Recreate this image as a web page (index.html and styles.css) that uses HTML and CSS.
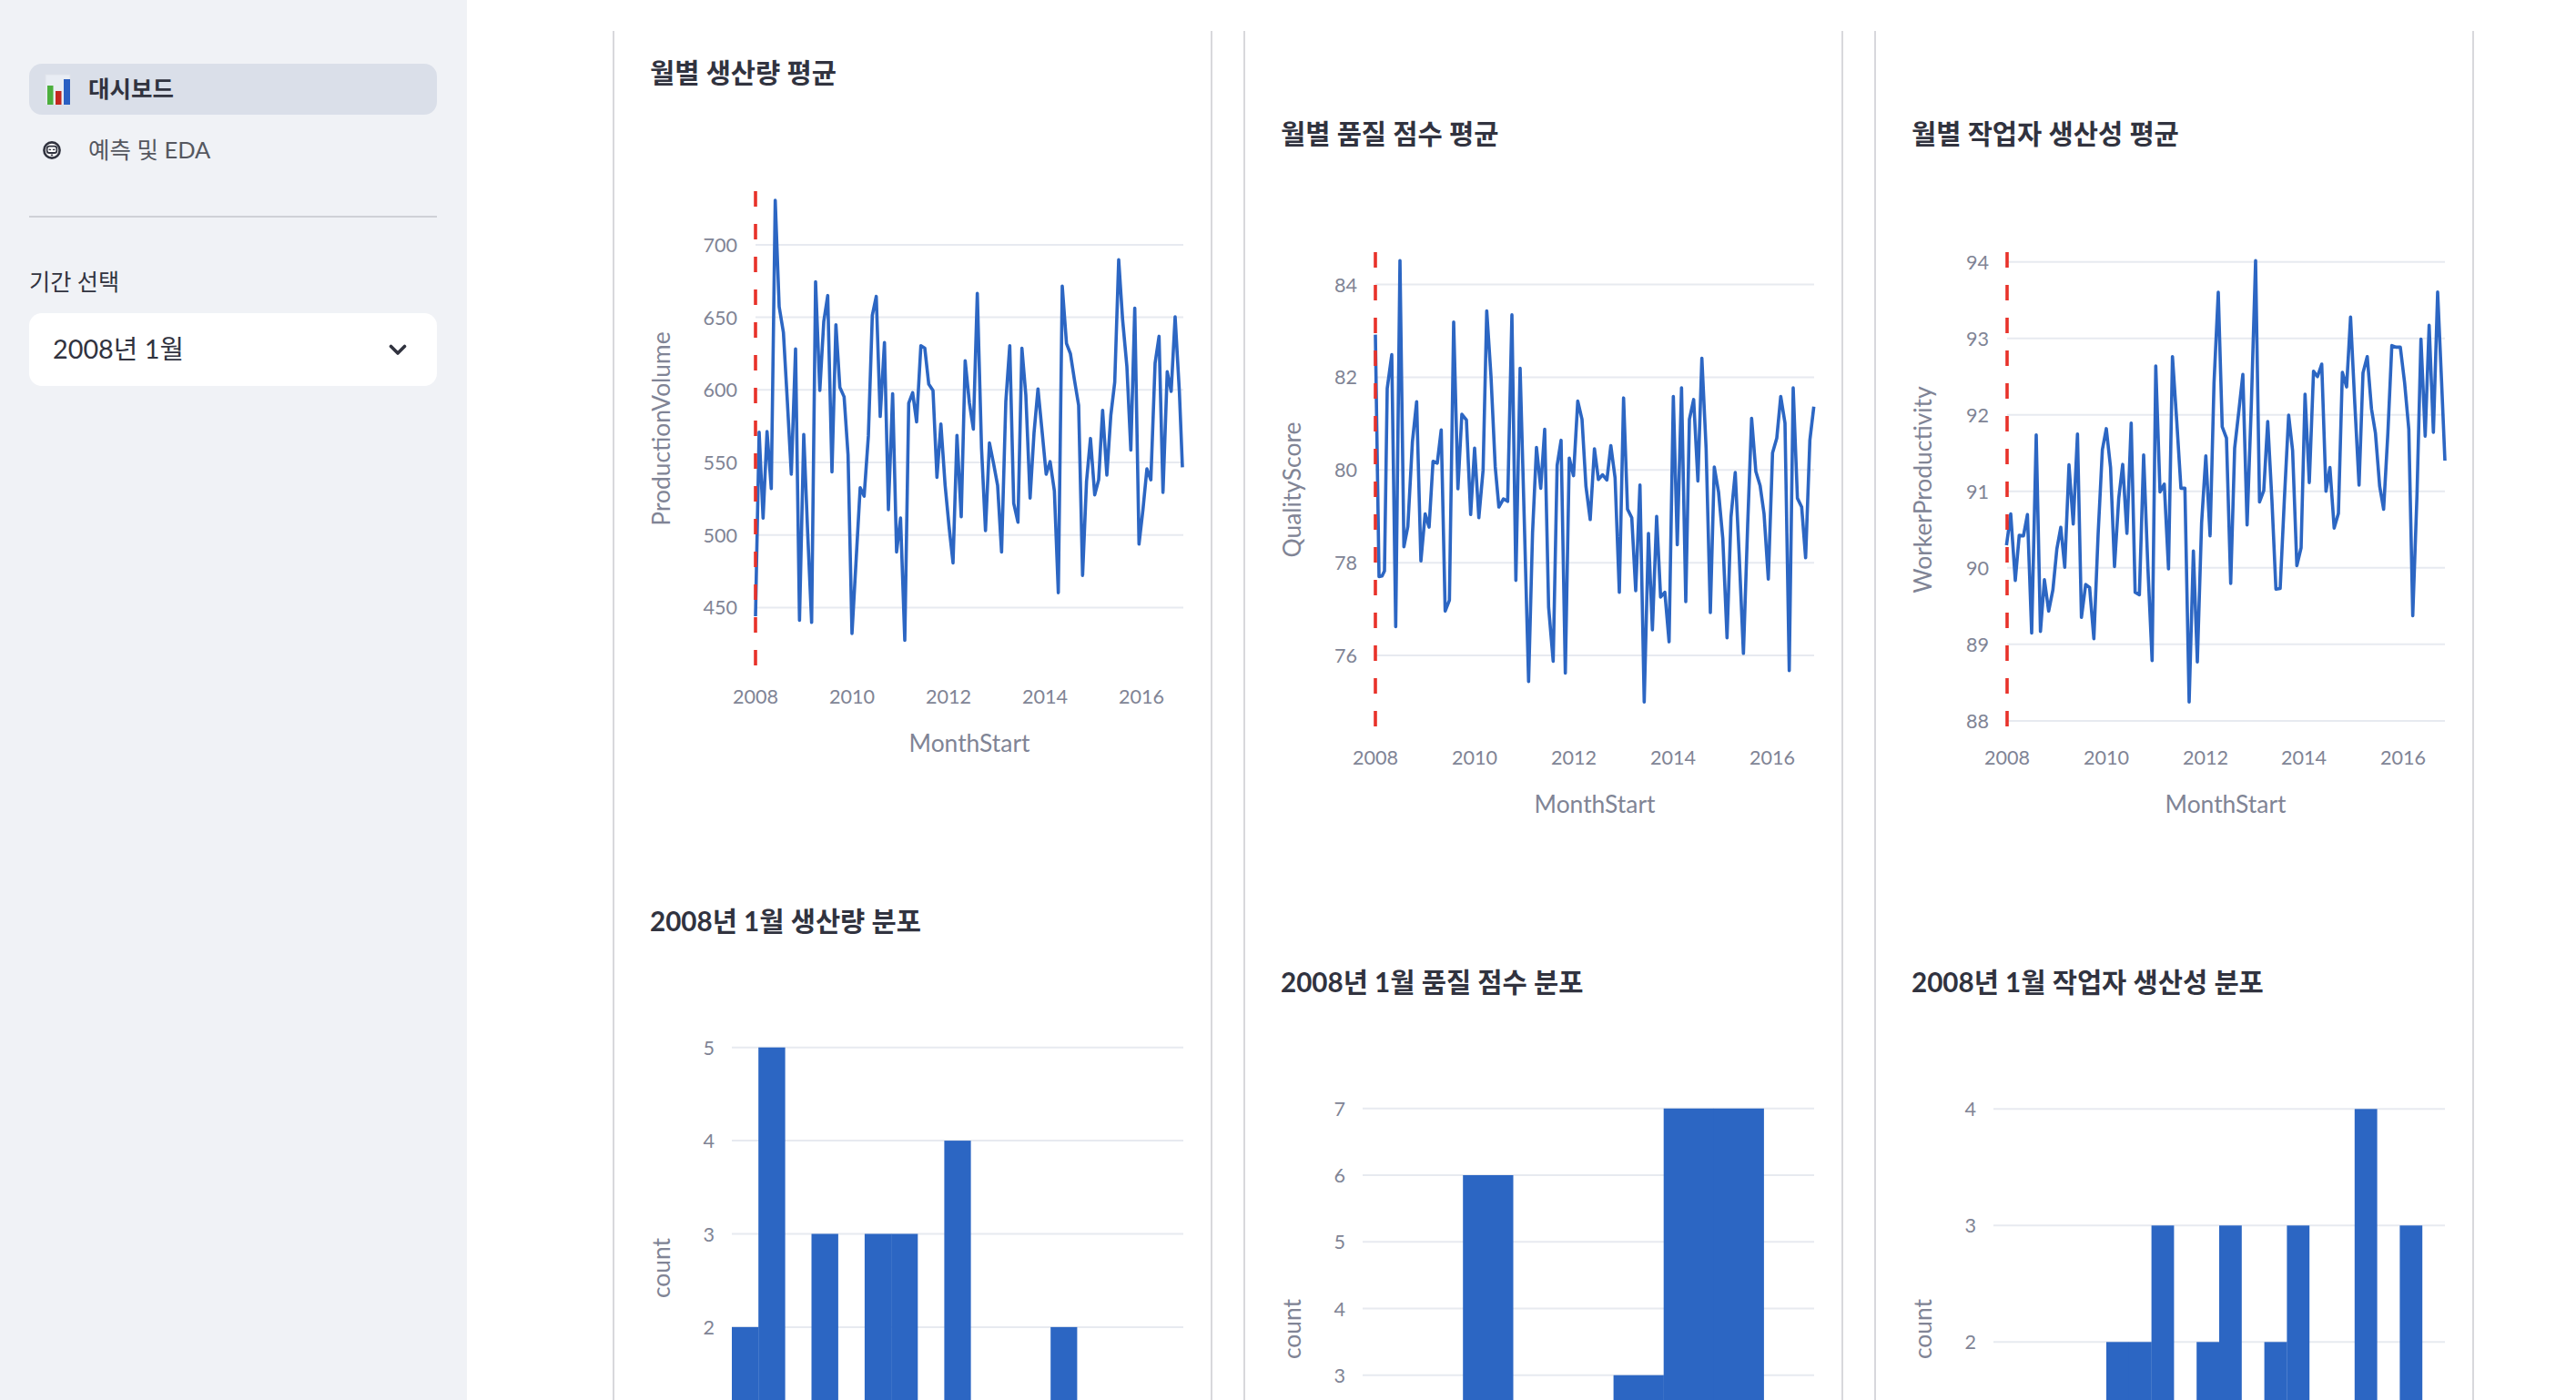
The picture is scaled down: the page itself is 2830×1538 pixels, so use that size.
FILE: index.html
```html
<!DOCTYPE html>
<html lang="ko">
<head>
<meta charset="utf-8">
<title>대시보드</title>
<link rel="stylesheet" href="styles.css">
</head>
<body>
<div class="app">
  <aside class="sidebar">
    <nav class="nav">
      <a class="nav-item active">
        <span class="nav-icon">
          <svg width="32" height="34" viewBox="0 0 32 34">
            <rect x="4" y="1" width="27" height="33" fill="#e9edf4"/>
            <rect x="4" y="1" width="27" height="33" fill="none" stroke="#dfe3ea" stroke-width="1"/>
            <rect x="6" y="13" width="6.5" height="21" fill="#4caf3e"/>
            <rect x="15" y="19" width="6.5" height="15" fill="#c4281f"/>
            <rect x="24" y="6" width="7" height="28" fill="#2a5fc2"/>
          </svg>
        </span>
        <span class="nav-text">대시보드</span>
      </a>
      <a class="nav-item">
        <span class="nav-icon">
          <svg width="32" height="22" viewBox="0 0 32 22">
            <circle cx="11" cy="11" r="8.6" fill="#fff" stroke="#31333f" stroke-width="2.6"/>
            <rect x="5.6" y="6.6" width="10.8" height="7.4" rx="2.6" fill="none" stroke="#31333f" stroke-width="1.8"/>
            <path d="M7.8 11 Q8.8 9.2 9.8 11 M12.2 11 Q13.2 9.2 14.2 11" fill="none" stroke="#31333f" stroke-width="1.1"/>
            <rect x="9.8" y="15.6" width="2.4" height="1.6" fill="#31333f"/>
          </svg>
        </span>
        <span class="nav-text">예측 및 EDA</span>
      </a>
    </nav>
    <div class="divider"></div>
    <div class="field-label">기간 선택</div>
    <div class="select">
      <span class="select-value">2008년 1월</span>
      <svg class="chevron" width="20" height="13" viewBox="0 0 20 13"><path d="M2.5 2.5 L10 10 L17.5 2.5" fill="none" stroke="#31333f" stroke-width="3.6" stroke-linecap="round" stroke-linejoin="round"/></svg>
    </div>
  </aside>

  <main class="main">
    <!-- Column 1 -->
    <section class="col">
      <div class="chart-title">월별 생산량 평균</div>
      <svg class="line-chart" width="655" height="887" viewBox="0 0 655 887">
        <g class="grid">
          <line x1="155" x2="625" y1="166.9" y2="166.9"/>
          <line x1="155" x2="625" y1="246.6" y2="246.6"/>
          <line x1="155" x2="625" y1="326.3" y2="326.3"/>
          <line x1="155" x2="625" y1="406.0" y2="406.0"/>
          <line x1="155" x2="625" y1="485.7" y2="485.7"/>
          <line x1="155" x2="625" y1="565.4" y2="565.4"/>
        </g>
        <g class="tick ytick">
          <text x="135" y="166.9">700</text>
          <text x="135" y="246.6">650</text>
          <text x="135" y="326.3">600</text>
          <text x="135" y="406.0">550</text>
          <text x="135" y="485.7">500</text>
          <text x="135" y="565.4">450</text>
        </g>
        <g class="tick xtick">
          <text x="155" y="663">2008</text>
          <text x="261" y="663">2010</text>
          <text x="367" y="663">2012</text>
          <text x="473" y="663">2014</text>
          <text x="579" y="663">2016</text>
        </g>
        <text class="axis-title" x="390" y="714">MonthStart</text>
        <text class="axis-title" transform="translate(51 369) rotate(-90)">ProductionVolume</text>
        <g transform="translate(145 98) scale(0.33333 0.34435)">
          <polyline class="series" points="30,1385 42,798 55,1072 68,796 82,978 95,58 108,398 122,480 135,700 148,932 162,532 175,1398 189,805 202,1120 215,1405 228,318 242,665 255,445 268,362 282,925 295,455 308,655 322,685 335,870 348,1440 362,1200 375,975 388,1002 402,810 415,425 428,365 441,748 455,512 468,1045 482,675 495,1180 508,1072 522,1462 535,705 548,672 561,765 575,522 588,530 601,645 615,665 628,942 641,772 655,968 668,1100 681,1215 694,808 708,1068 721,570 735,705 748,788 761,355 775,850 788,1112 801,832 815,900 828,968 841,1180 855,700 868,522 881,1025 895,1085 908,530 921,680 935,1008 948,800 961,660 975,800 988,932 1001,892 1015,985 1028,1310 1041,332 1055,515 1068,548 1081,630 1095,712 1108,1255 1121,955 1134,818 1148,998 1161,950 1174,728 1188,935 1201,745 1214,638 1227,248 1240,440 1254,588 1267,855 1280,402 1294,1155 1307,1045 1320,915 1333,950 1347,578 1360,492 1373,990 1387,605 1400,668 1413,430 1427,668 1437,910"/>
        </g>
        <line class="vline" x1="155" x2="155" y1="108" y2="630"/>
      </svg>
      <div class="chart-title">2008년 1월 생산량 분포</div>
      <svg class="hist-chart" width="655" height="503" viewBox="0 0 655 503">
        <g class="grid">
          <line x1="129" x2="625" y1="115.7" y2="115.7"/>
          <line x1="129" x2="625" y1="218.1" y2="218.1"/>
          <line x1="129" x2="625" y1="320.5" y2="320.5"/>
          <line x1="129" x2="625" y1="422.9" y2="422.9"/>
        </g>
        <g class="tick ytick">
          <text x="110" y="115.7">5</text>
          <text x="110" y="218.1">4</text>
          <text x="110" y="320.5">3</text>
          <text x="110" y="422.9">2</text>
        </g>
        <text class="axis-title" transform="translate(51 358) rotate(-90)">count</text>
        <g class="bars">
          <rect x="129" y="422.9" width="29.4" height="204.8"/>
          <rect x="158.2" y="115.7" width="29.4" height="512"/>
          <rect x="216.5" y="320.5" width="29.4" height="307.2"/>
          <rect x="274.9" y="320.5" width="29.4" height="307.2"/>
          <rect x="304.1" y="320.5" width="29.2" height="307.2"/>
          <rect x="362.4" y="218.1" width="29.2" height="409.6"/>
          <rect x="479.2" y="422.9" width="29.2" height="204.8"/>
        </g>
      </svg>
    </section>

    <!-- Column 2 -->
    <section class="col col-offset">
      <div class="chart-title">월별 품질 점수 평균</div>
      <svg class="line-chart" width="655" height="887" viewBox="0 0 655 887">
        <g class="grid">
          <line x1="143" x2="625" y1="143.5" y2="143.5"/>
          <line x1="143" x2="625" y1="245.4" y2="245.4"/>
          <line x1="143" x2="625" y1="347.3" y2="347.3"/>
          <line x1="143" x2="625" y1="449.2" y2="449.2"/>
          <line x1="143" x2="625" y1="551.1" y2="551.1"/>
        </g>
        <g class="tick ytick">
          <text x="123" y="143.5">84</text>
          <text x="123" y="245.4">82</text>
          <text x="123" y="347.3">80</text>
          <text x="123" y="449.2">78</text>
          <text x="123" y="551.1">76</text>
        </g>
        <g class="tick xtick">
          <text x="143" y="663">2008</text>
          <text x="252" y="663">2010</text>
          <text x="361" y="663">2012</text>
          <text x="470" y="663">2014</text>
          <text x="579" y="663">2016</text>
        </g>
        <text class="axis-title" x="384" y="714">MonthStart</text>
        <text class="axis-title" transform="translate(51 369) rotate(-90)">QualityScore</text>
        <g transform="translate(132 96) scale(0.33333 0.34435)">
          <polyline class="series" points="33,298 45,1070 55,1068 63,1052 72,470 87,362 100,1230 114,62 127,975 140,910 155,640 169,512 183,1020 197,870 210,912 223,702 237,708 250,602 263,1180 277,1145 291,258 305,790 318,552 333,570 347,872 360,660 374,882 388,730 400,222 414,430 428,720 440,848 455,822 469,830 483,235 496,1082 510,405 524,900 538,1405 551,930 564,658 578,788 591,600 604,1168 619,1340 632,715 645,635 659,1378 672,692 686,748 700,510 714,568 727,782 741,888 755,662 768,760 782,745 796,762 809,652 823,755 837,1120 851,500 864,855 878,882 891,1115 905,778 919,1470 933,932 946,1240 960,878 973,1135 987,1120 1001,1278 1015,495 1028,968 1042,468 1056,1150 1068,568 1082,505 1096,765 1109,373 1123,660 1137,1185 1150,720 1164,800 1178,948 1192,1265 1205,880 1219,738 1232,1000 1246,1315 1260,905 1273,565 1287,735 1301,780 1314,870 1328,1078 1342,675 1356,628 1369,495 1383,580 1397,1370 1410,468 1424,820 1438,848 1451,1010 1465,635 1478,528"/>
        </g>
        <line class="vline" x1="143" x2="143" y1="108" y2="630"/>
      </svg>
      <div class="chart-title">2008년 1월 품질 점수 분포</div>
      <svg class="hist-chart" width="655" height="436" viewBox="0 0 655 436">
        <g class="grid">
          <line x1="129" x2="625" y1="115.75" y2="115.75"/>
          <line x1="129" x2="625" y1="189" y2="189"/>
          <line x1="129" x2="625" y1="262.25" y2="262.25"/>
          <line x1="129" x2="625" y1="335.5" y2="335.5"/>
          <line x1="129" x2="625" y1="408.75" y2="408.75"/>
        </g>
        <g class="tick ytick">
          <text x="110" y="115.75">7</text>
          <text x="110" y="189">6</text>
          <text x="110" y="262.25">5</text>
          <text x="110" y="335.5">4</text>
          <text x="110" y="408.75">3</text>
        </g>
        <text class="axis-title" transform="translate(51 358) rotate(-90)">count</text>
        <g class="bars">
          <rect x="239.2" y="189" width="55.3" height="439.5"/>
          <rect x="404.6" y="408.75" width="55.3" height="219.75"/>
          <rect x="459.7" y="115.75" width="55.3" height="512.75"/>
          <rect x="514.8" y="115.75" width="55.1" height="512.75"/>
        </g>
      </svg>
    </section>

    <!-- Column 3 -->
    <section class="col col-offset">
      <div class="chart-title">월별 작업자 생산성 평균</div>
      <svg class="line-chart" width="655" height="887" viewBox="0 0 655 887">
        <g class="grid">
          <line x1="144" x2="625" y1="118.7" y2="118.7"/>
          <line x1="144" x2="625" y1="202.7" y2="202.7"/>
          <line x1="144" x2="625" y1="286.8" y2="286.8"/>
          <line x1="144" x2="625" y1="370.8" y2="370.8"/>
          <line x1="144" x2="625" y1="454.8" y2="454.8"/>
          <line x1="144" x2="625" y1="538.8" y2="538.8"/>
          <line x1="144" x2="625" y1="622.9" y2="622.9"/>
        </g>
        <g class="tick ytick">
          <text x="124" y="118.7">94</text>
          <text x="124" y="202.7">93</text>
          <text x="124" y="286.8">92</text>
          <text x="124" y="370.8">91</text>
          <text x="124" y="454.8">90</text>
          <text x="124" y="538.8">89</text>
          <text x="124" y="622.9">88</text>
        </g>
        <g class="tick xtick">
          <text x="144" y="663">2008</text>
          <text x="253" y="663">2010</text>
          <text x="362" y="663">2012</text>
          <text x="470" y="663">2014</text>
          <text x="579" y="663">2016</text>
        </g>
        <text class="axis-title" x="384" y="714">MonthStart</text>
        <text class="axis-title" transform="translate(51 369) rotate(-90)">WorkerProductivity</text>
        <g transform="translate(134 96) scale(0.33333 0.34435)">
          <polyline class="series" points="28,970 42,870 57,1082 70,938 84,940 97,872 111,1250 126,618 140,1245 153,1080 167,1180 181,1112 194,982 207,913 220,1040 234,713 248,902 262,615 275,1200 289,1095 302,1105 316,1268 330,935 344,665 357,598 371,722 384,1038 398,820 411,712 425,932 439,580 452,1120 466,1128 480,682 494,1040 508,1338 520,398 534,800 548,775 562,1045 575,368 589,572 603,788 616,788 630,1470 644,988 657,1342 671,900 685,685 699,940 712,452 726,163 739,592 753,628 767,1092 780,660 794,540 807,425 821,905 835,520 849,62 862,832 876,795 889,575 903,830 916,1110 930,1108 944,820 958,555 971,668 985,1035 999,978 1012,488 1026,770 1040,415 1053,432 1067,392 1081,798 1094,722 1108,915 1122,868 1135,418 1149,465 1162,242 1176,518 1190,778 1203,420 1217,368 1231,535 1244,612 1258,782 1271,855 1285,612 1298,333 1312,338 1326,338 1340,450 1354,600 1367,1195 1381,808 1394,312 1408,622 1421,268 1435,610 1449,162 1462,448 1473,700"/>
        </g>
        <line class="vline" x1="144" x2="144" y1="108" y2="630"/>
      </svg>
      <div class="chart-title">2008년 1월 작업자 생산성 분포</div>
      <svg class="hist-chart" width="655" height="436" viewBox="0 0 655 436">
        <g class="grid">
          <line x1="129" x2="625" y1="116.3" y2="116.3"/>
          <line x1="129" x2="625" y1="244.3" y2="244.3"/>
          <line x1="129" x2="625" y1="372.3" y2="372.3"/>
        </g>
        <g class="tick ytick">
          <text x="110" y="116.3">4</text>
          <text x="110" y="244.3">3</text>
          <text x="110" y="372.3">2</text>
        </g>
        <text class="axis-title" transform="translate(51 358) rotate(-90)">count</text>
        <g class="bars">
          <rect x="253" y="372.3" width="25" height="256"/>
          <rect x="277.8" y="372.3" width="25" height="256"/>
          <rect x="302.6" y="244.3" width="24.8" height="384"/>
          <rect x="352.2" y="372.3" width="25" height="256"/>
          <rect x="377" y="244.3" width="24.8" height="384"/>
          <rect x="426.6" y="372.3" width="25" height="256"/>
          <rect x="451.4" y="244.3" width="24.8" height="384"/>
          <rect x="525.8" y="116.3" width="24.8" height="512"/>
          <rect x="575.4" y="244.3" width="24.8" height="384"/>
        </g>
      </svg>
    </section>
  </main>
</div>
</body>
</html>
```

FILE: styles.css
```css
html, body {
  margin: 0;
  padding: 0;
  height: 100%;
  overflow: hidden;
  background: #ffffff;
  font-family: "Lato", "Noto Sans CJK KR", "Noto Sans", sans-serif;
  color: #31333f;
}

.app {
  display: flex;
  height: 100vh;
}

/* ---------- Sidebar ---------- */
.sidebar {
  flex: 0 0 513px;
  box-sizing: border-box;
  background: #f0f2f6;
  padding: 70px 33px 0 32px;
  display: flex;
  flex-direction: column;
}

.nav {
  display: flex;
  flex-direction: column;
  gap: 11px;
}

.nav-item {
  display: flex;
  align-items: center;
  height: 56px;
  box-sizing: border-box;
  padding-left: 14px;
  border-radius: 14px;
  gap: 19px;
  font-size: 25.5px;
  color: #55575f;
  text-decoration: none;
}

.nav-item.active {
  background: #dadfe9;
  color: #31333f;
  font-weight: 600;
}

.nav-text {
  padding-bottom: 5px;
}

.nav-icon {
  display: flex;
  align-items: center;
  width: 32px;
}

.nav-icon svg {
  display: block;
}

.divider {
  height: 2px;
  background: #cfd1d7;
  margin-top: 44px;
}

.field-label {
  margin-top: 52px;
  font-size: 25.2px;
  line-height: 36px;
  color: #31333f;
}

.select {
  margin-top: 17px;
  height: 80px;
  box-sizing: border-box;
  background: #ffffff;
  border-radius: 14px;
  padding: 0 33px 0 26px;
  display: flex;
  align-items: center;
  justify-content: space-between;
}

.select-value {
  font-size: 28.8px;
  color: #31333f;
  padding-bottom: 6px;
}

.chevron {
  display: block;
}

/* ---------- Main ---------- */
.main {
  flex: 1 1 auto;
  display: flex;
  align-items: stretch;
  gap: 34px;
  padding: 34px 0 0 160px;
  overflow: hidden;
}

.col {
  flex: 0 0 659px;
  box-sizing: border-box;
  border-left: 2px solid #d8d8dc;
  border-right: 2px solid #d8d8dc;
  padding-top: 23px;
  display: flex;
  flex-direction: column;
}

.col-offset {
  padding-top: 90px;
}

.chart-title {
  padding-left: 39px;
  font-size: 29.6px;
  line-height: 46px;
  height: 46px;
  font-weight: 700;
  color: #31333f;
  white-space: nowrap;
}

.line-chart,
.hist-chart {
  display: block;
  flex: 0 0 auto;
}

.line-chart {
  margin-top: -1px;
}

.grid line {
  stroke: #e7eaf0;
  stroke-width: 2;
}

.tick text {
  font-family: "Lato", "Noto Sans", sans-serif;
  font-size: 21.6px;
  fill: #808495;
  dominant-baseline: central;
}

.ytick text {
  text-anchor: end;
}

.xtick text {
  text-anchor: middle;
}

.axis-title {
  font-family: "Lato", "Noto Sans", sans-serif;
  font-size: 26.4px;
  fill: #808495;
  text-anchor: middle;
  dominant-baseline: central;
}

.series {
  fill: none;
  stroke: #2c66c3;
  stroke-width: 3.6;
  stroke-linejoin: round;
  vector-effect: non-scaling-stroke;
}

.vline {
  stroke: #e8322a;
  stroke-width: 3.6;
  stroke-dasharray: 17 19;
}

.bars rect {
  fill: #2c66c3;
}
```
